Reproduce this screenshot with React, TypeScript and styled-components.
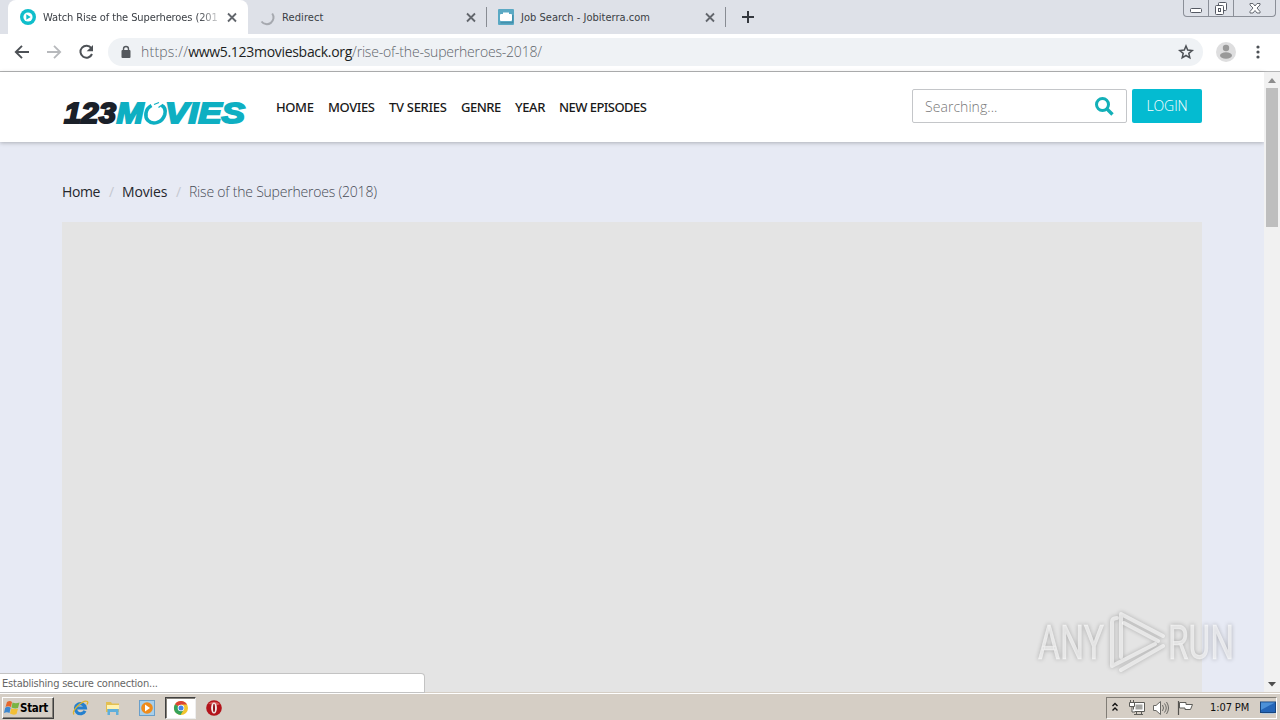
import React from "react";
import styled, { createGlobalStyle } from "styled-components";

const Global = createGlobalStyle`
  * { box-sizing: border-box; }
  body { margin: 0; overflow: hidden; background: #e7eaf4; }
  svg { display: block; flex: none; overflow: visible; }
`;

const ui = `"DejaVu Sans Condensed", "DejaVu Sans", sans-serif`;

const Screen = styled.div`
  width: 1280px;
  height: 720px;
  display: flex;
  flex-direction: column;
  position: relative;
  overflow: hidden;
`;

/* Tab strip */
const TabStrip = styled.div`
  height: 34px;
  flex: none;
  display: flex;
  align-items: flex-start;
  background: #dee1e8;
  padding-left: 8px;
`;
const Tab = styled.div<{ $active?: boolean; $w: number; $pad?: number }>`
  width: ${(p) => p.$w}px;
  height: 34px;
  display: flex;
  align-items: center;
  padding-left: ${(p) => p.$pad ?? 12}px;
  padding-right: ${(p) => (p.$active ? 8 : 7)}px;
  background: ${(p) => (p.$active ? "#fff" : "transparent")};
  border-radius: 8px 8px 0 0;
`;
const TabTitle = styled.span<{ $ls: number; $fade?: boolean }>`
  flex: 1;
  margin-left: 7px;
  padding-top: 1px;
  white-space: nowrap;
  font: 11px/16px ${ui};
  font-stretch: condensed;
  letter-spacing: ${(p) => p.$ls}px;
  color: #3a3e44;
  ${(p) => p.$fade && "mask-image: linear-gradient(90deg, #000 156px, rgba(0,0,0,.2) 175px);"}
`;
const TabClose = styled.span`
  width: 16px;
  margin-left: 6px;
`;
const Separator = styled.span`
  width: 1px;
  height: 20px;
  margin-top: 7px;
  background: #888c93;
`;
const NewTab = styled.span`
  margin: 10px 0 0 15px;
`;
const WindowButtons = styled.div`
  display: flex;
  margin: 0 4px 0 auto;
  width: 93px;
  height: 17px;
  border: 1px solid #8b8f98;
  border-top: 0;
  border-radius: 0 0 4px 4px;
`;
const WindowButton = styled.span<{ $w: number }>`
  width: ${(p) => p.$w}px;
  display: flex;
  justify-content: center;
  & + & { border-left: 1px solid #8b8f98; }
`;

/* Address bar */
const Toolbar = styled.div`
  height: 38px;
  flex: none;
  display: flex;
  align-items: center;
  background: #fff;
  border-bottom: 1px solid #b4b5b6;
  padding: 0 14px 1px;
`;
const ToolIcon = styled.span<{ $gap: number }>`
  margin-right: ${(p) => p.$gap}px;
`;
const Omnibox = styled.div`
  width: 1095px;
  flex: none;
  margin-right: 13px;
  height: 28px;
  border-radius: 14px;
  background: #eff2f5;
  display: flex;
  align-items: center;
  padding: 0 9px 0 11px;
`;
const Url = styled.span`
  flex: 1;
  margin-left: 8px;
  font: 300 14px/20px "Open Sans", sans-serif;
  letter-spacing: -0.19px;
  color: #5f656b;
`;
const Scheme = styled.span`
  letter-spacing: 0.22px;
`;
const Domain = styled.span`
  font-weight: 400;
  letter-spacing: -0.3px;
  color: #1c1f23;
`;

/* Page */
const Viewport = styled.div`
  flex: 1;
  min-height: 0;
  display: flex;
`;
const Page = styled.main`
  width: 1264px;
  background: #e7eaf4;
  display: flex;
  flex-direction: column;
`;
const Header = styled.header`
  height: 70px;
  flex: none;
  display: flex;
  align-items: flex-start;
  background: #fff;
  box-shadow: 0 1px 4px rgba(0, 0, 0, 0.25);
  padding: 17px 62px 0 62px;
`;
const LogoBox = styled.div`
  width: 214px;
  padding-top: 8px;
`;
const Nav = styled.nav`
  display: flex;
  padding-top: 8px;
`;
const NavLink = styled.span<{ $w: number; $ls?: number }>`
  width: ${(p) => p.$w}px;
  font: 500 13px/20px "Noto Sans", sans-serif;
  letter-spacing: ${(p) => p.$ls ?? -0.4}px;
  white-space: nowrap;
  color: #191919;
`;
const Search = styled.div`
  width: 215px;
  height: 34px;
  margin-left: auto;
  border: 1px solid #c4c6c9;
  border-radius: 2px;
  display: flex;
  align-items: center;
  justify-content: space-between;
  padding: 0 12px 0 12px;
  font: 300 14px/20px "Open Sans", sans-serif;
  letter-spacing: 0.05px;
  color: #777;
`;
const Placeholder = styled.span`
  padding-top: 2px;
`;
const Login = styled.div`
  width: 70px;
  height: 34px;
  margin-left: 5px;
  border-radius: 2px;
  background: #04bbd1;
  color: #fff;
  font: 300 14px/33px "Open Sans", sans-serif;
  letter-spacing: -0.1px;
  text-align: center;
`;
const Crumbs = styled.div`
  display: flex;
  margin: 40px 0 20px 62px;
  font: 400 14px/20px "Open Sans", sans-serif;
  color: #25272d;
`;
const Crumb = styled.span<{ $w?: number; $muted?: boolean; $ls: number }>`
  width: ${(p) => (p.$w ? p.$w + "px" : "auto")};
  letter-spacing: ${(p) => p.$ls}px;
  white-space: nowrap;
  font-weight: ${(p) => (p.$muted ? 300 : 400)};
  color: ${(p) => (p.$muted ? "#484c56" : "#25272d")};
`;
const Slash = styled.span<{ $w: number }>`
  width: ${(p) => p.$w}px;
  color: #c5c8d0;
`;
const Player = styled.div`
  flex: 1;
  width: 1140px;
  margin-left: 62px;
  background: #e4e4e4;
`;
const Scrollbar = styled.div`
  width: 16px;
  background: #f1f1f1;
  display: flex;
  flex-direction: column;
  align-items: center;
`;
const Arrow = styled.span`
  height: 16px;
  padding-top: 6px;
`;
const Thumb = styled.span`
  width: 12px;
  height: 139px;
  background: #bebebe;
  margin-bottom: auto;
`;

/* Overlays */
const Status = styled.div`
  position: absolute;
  left: 0;
  top: 673px;
  width: 425px;
  height: 20px;
  background: #fff;
  border: 1px solid #c3c3c3;
  border-left: 0;
  border-radius: 0 4px 0 0;
  padding: 1px 0 0 2px;
  font: 11px/18px ${ui};
  font-stretch: condensed;
  letter-spacing: -0.22px;
  color: #666;
`;
const Watermark = styled.div`
  position: absolute;
  left: 1036px;
  top: 608px;
  width: 200px;
  height: 66px;
  filter: drop-shadow(0 0 2px rgba(0, 0, 0, 0.4));
`;

/* Taskbar */
const Taskbar = styled.footer`
  height: 28px;
  flex: none;
  background: #d5cec5;
  border-top: 1px solid #d5cec5;
  box-shadow: inset 0 1px #fff;
  display: flex;
  align-items: center;
  padding: 2px 3px 0 2px;
`;
const Start = styled.div`
  width: 52px;
  height: 22px;
  display: flex;
  align-items: center;
  padding-left: 1px;
  border: 1px solid;
  border-color: #fff #404040 #404040 #fff;
  box-shadow: inset -1px -1px #85817a;
  font: bold 11.5px/16px ${ui};
  font-stretch: condensed;
  letter-spacing: -0.3px;
  color: #000;
`;
const TaskIcon = styled.span<{ $w: number; $shift?: number; $pressed?: boolean }>`
  width: ${(p) => p.$w}px;
  height: 22px;
  margin-left: ${(p) => p.$shift ?? 0}px;
  display: flex;
  align-items: center;
  justify-content: center;
  ${(p) =>
    p.$pressed &&
    "background: #fff; border: 1px solid; border-color: #404040 #eee #eee #404040; box-shadow: inset 1px 1px #85817a;"}
`;
const Tray = styled.div`
  width: 171px;
  height: 22px;
  margin-left: auto;
  display: flex;
  align-items: center;
  border: 1px solid;
  border-color: #817d76 #fff #fff #817d76;
  padding-left: 4px;
  font: 11px/16px ${ui};
  font-stretch: condensed;
  color: #111;
`;
const Clock = styled.span`
  width: 51px;
  margin-left: 16px;
  letter-spacing: -0.1px;
  white-space: nowrap;
`;
const TrayIcon = styled.span<{ $l?: number }>`
  margin-left: ${(p) => p.$l ?? 0}px;
`;

const Cross = () => (
  <svg width="16" height="16" viewBox="0 0 16 16" stroke="#62666c" strokeWidth="1.8">
    <path d="M4 4.500l8 8M12 4.500l-8 8" />
  </svg>
);

const Logo = () => (
  <svg width="188" height="32" viewBox="0 0 188 32" fontFamily='"Liberation Sans", Arial, sans-serif' fontWeight="bold" fontStyle="italic" fontSize="29" strokeWidth="1.9">
    <text x="2" y="26.200" textLength="52" lengthAdjust="spacingAndGlyphs" fill="#1a2029" stroke="#1a2029">123</text>
    <g fill="#0eafc2" stroke="#0eafc2">
      <text x="54.500" y="26.200" textLength="27" lengthAdjust="spacingAndGlyphs">M</text>
      <text x="103" y="26.200" textLength="80" lengthAdjust="spacingAndGlyphs">VIES</text>
    </g>
    <path d="M89.500 8.500C83 12 82.500 20 86 23.500C91 28.500 100.500 25.500 102.800 17.500C104 12.500 102 9.500 99.500 8.300" fill="none" stroke="#0eafc2" strokeWidth="3.600" />
    <path d="M92 7.500l5-2M96.500 10.500l3.500-2.500" stroke="#0eafc2" strokeWidth="1.300" fill="none" />
  </svg>
);

export default function App() {
  return (
    <Screen>
      <Global />
      <TabStrip>
        <Tab $active $w={240}>
          <svg width="16" height="16" viewBox="0 0 16 16">
            <circle cx="8" cy="8" r="8" fill="#0fbecb" />
            <circle cx="8" cy="8" r="4.600" fill="#fff" />
            <path d="M6.300 5.200l4.400 2.800-4.400 2.800z" fill="#0fbecb" />
          </svg>
          <TabTitle $ls={-0.1} $fade>Watch Rise of the Superheroes (201</TabTitle>
          <TabClose><Cross /></TabClose>
        </Tab>
        <Tab $w={238} $pad={11}>
          <svg width="16" height="16" viewBox="0 0 16 16" fill="none" stroke="#a6a9af" strokeWidth="2">
            <path d="M13.200 4.500A6 6 0 0 1 2.500 12.500" />
          </svg>
          <TabTitle $ls={0.1}>Redirect</TabTitle>
          <TabClose><Cross /></TabClose>
        </Tab>
        <Separator />
        <Tab $w={238} $pad={11}>
          <svg width="16" height="16" viewBox="0 0 16 16">
            <rect width="16" height="16" rx="1" fill="#5ba9c4" />
            <path d="M5 3.500h6V5h2a1 1 0 0 1 1 1v5a1 1 0 0 1-1 1H3a1 1 0 0 1-1-1V6a1 1 0 0 1 1-1h2z" fill="#fff" />
            <path d="M2.500 13.800h12.300V6" fill="none" stroke="#3986a3" />
          </svg>
          <TabTitle $ls={0.02}>Job Search - Jobiterra.com</TabTitle>
          <TabClose><Cross /></TabClose>
        </Tab>
        <Separator />
        <NewTab>
          <svg width="14" height="14" viewBox="0 0 14 14" stroke="#34383e" strokeWidth="2"><path d="M7 1v12M1 7h12" /></svg>
        </NewTab>
        <WindowButtons>
          <WindowButton $w={24}>
            <svg width="24" height="16" viewBox="0 0 24 16"><rect x="6.500" y="8.500" width="11" height="4" rx="1" fill="#fff" stroke="#555963" /></svg>
          </WindowButton>
          <WindowButton $w={25}>
            <svg width="24" height="16" viewBox="0 0 24 16" fill="#fff" stroke="#555963"><rect x="9.500" y="2.500" width="8" height="8" rx="1" /><rect x="6.500" y="5.500" width="8" height="9" rx="1" /><rect x="9.500" y="8.500" width="2" height="3" /></svg>
          </WindowButton>
          <WindowButton $w={42}>
            <svg width="24" height="16" viewBox="0 0 24 16"><path d="M7 3.500h3l2 2.500 2-2.500h3v1.500L14 8l3 3.500V13h-3l-2-2.500-2 2.500H7v-1.500L10 8 7 5z" fill="#fff" stroke="#666a72" /></svg>
          </WindowButton>
        </WindowButtons>
      </TabStrip>

      <Toolbar>
        <ToolIcon $gap={16}>
          <svg width="16" height="16" viewBox="0 0 16 16" fill="none" stroke="#4d5156" strokeWidth="1.900"><path d="M15 8H2.500M8 1.800L1.800 8 8 14.200" /></svg>
        </ToolIcon>
        <ToolIcon $gap={16}>
          <svg width="16" height="16" viewBox="0 0 16 16" fill="none" stroke="#b7b9bc" strokeWidth="1.800"><path d="M1 8h12.500M8 1.800L14.200 8 8 14.200" /></svg>
        </ToolIcon>
        <ToolIcon $gap={14}>
          <svg width="16" height="16" viewBox="0 0 16 16"><path d="M13.300 4.200A6 6 0 1 0 14 10" fill="none" stroke="#4d5156" strokeWidth="2" /><path d="M15 1v6.300H8.700z" fill="#4d5156" /></svg>
        </ToolIcon>
        <Omnibox>
          <svg width="14" height="14" viewBox="0 0 14 14"><rect x="2.500" y="5" width="9" height="8" rx="1" fill="#54585d" /><path d="M4.500 5.500V4a2.500 2.500 0 0 1 5 0v1.500" fill="none" stroke="#54585d" strokeWidth="1.400" /></svg>
          <Url><Scheme>https://</Scheme><Domain>www5.123moviesback.org</Domain>/rise-of-the-superheroes-2018/</Url>
          <svg width="16" height="16" viewBox="0 0 16 16"><path d="M8 2l1.700 4.100 4.500.4-3.400 2.900 1 4.400L8 11.500l-3.800 2.300 1-4.400L1.800 6.500l4.500-.4z" fill="none" stroke="#4d5156" strokeWidth="1.500" /></svg>
        </Omnibox>
        <ToolIcon $gap={20}>
          <svg width="20" height="20" viewBox="0 0 20 20"><circle cx="10" cy="10" r="10" fill="#dededf" /><circle cx="10" cy="6" r="3.200" fill="#999" /><ellipse cx="10" cy="13.500" rx="6" ry="3.200" fill="#999" /></svg>
        </ToolIcon>
        <svg width="4" height="16" viewBox="0 0 4 16" fill="#4d5156"><circle cx="2" cy="3" r="1.600" /><circle cx="2" cy="8" r="1.600" /><circle cx="2" cy="13" r="1.600" /></svg>
      </Toolbar>

      <Viewport>
        <Page>
          <Header>
            <LogoBox><Logo /></LogoBox>
            <Nav>
              <NavLink $w={52}>HOME</NavLink>
              <NavLink $w={61}>MOVIES</NavLink>
              <NavLink $w={72} $ls={-0.3}>TV SERIES</NavLink>
              <NavLink $w={54} $ls={-0.5}>GENRE</NavLink>
              <NavLink $w={44}>YEAR</NavLink>
              <NavLink $w={90} $ls={-0.55}>NEW EPISODES</NavLink>
            </Nav>
            <Search>
              <Placeholder>Searching...</Placeholder>
              <svg width="19" height="19" viewBox="0 0 19 19" fill="none" stroke="#13b0b8"><circle cx="7.500" cy="7.500" r="6" strokeWidth="3" /><path d="M12 12l5.500 5.500" strokeWidth="3.300" /></svg>
            </Search>
            <Login>LOGIN</Login>
          </Header>
          <Crumbs>
            <Crumb $w={47} $ls={-0.4}>Home</Crumb>
            <Slash $w={13}>/</Slash>
            <Crumb $w={54} $ls={-0.15}>Movies</Crumb>
            <Slash $w={13}>/</Slash>
            <Crumb $muted $ls={-0.21}>Rise of the Superheroes (2018)</Crumb>
          </Crumbs>
          <Player />
        </Page>
        <Scrollbar>
          <Arrow><svg width="8" height="5" viewBox="0 0 8 5"><path d="M0 5l4-5 4 5z" fill="#8c8c8c" /></svg></Arrow>
          <Thumb />
          <Arrow><svg width="8" height="5" viewBox="0 0 8 5"><path d="M0 0h8L4 4.500z" fill="#4d4d4d" /></svg></Arrow>
        </Scrollbar>
      </Viewport>

      <Taskbar>
        <Start>
          <svg width="16" height="16" viewBox="0 0 16 16"><path d="M3 2q3-2 5 0L7 7Q4 5.500 1.500 7z" fill="#e5672c" /><path d="M8.500 2.500q3 1.500 7 0L14 8q-3 1-6.500-.5z" fill="#79b443" /><path d="M1.200 7.700Q4 6 6.700 7.700l-1.200 5.300Q3 11.500 0 13z" fill="#3d87cf" /><path d="M7.300 8.200q3 1.500 6.700.5l-1.500 5.300q-3 1.500-6.500-.5z" fill="#f3bf35" /></svg>
          Start
        </Start>
        <TaskIcon $w={52}>
          <svg width="17" height="16" viewBox="0 0 17 16" fill="none"><path d="M13 10.800A5 5 0 1 1 13.400 8H4.500" stroke="#2580ce" strokeWidth="3.200" /><path d="M2 14.500C-1 11 11-1 15.500 1.500c1 1 0 2-.5 3" stroke="#dfb52c" strokeWidth="1.300" /></svg>
        </TaskIcon>
        <TaskIcon $w={15} $shift={-1}>
          <svg width="16" height="16" viewBox="0 0 16 16"><path d="M1 2h5l1 1.500h7V12H1z" fill="#e3bf52" /><path d="M2 5h12v4H2z" fill="#fff2b0" /><path d="M2.500 15V9h11v6H11v-3H5v3z" fill="#5fafdc" /></svg>
        </TaskIcon>
        <TaskIcon $w={52} $shift={1}>
          <svg width="16" height="16" viewBox="0 0 16 16"><rect x=".5" y=".5" width="15" height="15" fill="#a8cfea" stroke="#6a9fca" /><circle cx="8" cy="8" r="5.800" fill="#ef8b1b" /><path d="M6 4.500l5 3.500-5 3.500z" fill="#fff" /></svg>
        </TaskIcon>
        <TaskIcon $w={31} $shift={-8} $pressed>
          <svg width="14" height="14" viewBox="0 0 14 14"><circle cx="7" cy="7" r="7" fill="#f2c52e" /><path d="M7 7L1 3.300A7 7 0 0 1 13 3.500H7z" fill="#dc4335" /><path d="M1 3.300A7 7 0 0 0 6.500 14L9.500 9z" fill="#35a25a" /><circle cx="7" cy="7" r="3.300" fill="#fff" /><circle cx="7" cy="7" r="2.500" fill="#4684e8" /></svg>
        </TaskIcon>
        <TaskIcon $w={36}>
          <svg width="16" height="16" viewBox="0 0 16 16"><circle cx="8" cy="8" r="7.800" fill="#b3141b" /><path d="M2 4Q8-.5 14 4Q11 6 8 5T2 4z" fill="#d85a58" /><ellipse cx="8" cy="8" rx="2.900" ry="5.600" fill="#f3eeec" /><ellipse cx="8" cy="8" rx="1" ry="4.300" fill="#8f1116" /></svg>
        </TaskIcon>
        <Tray>
          <svg width="8" height="11" viewBox="0 0 8 11" fill="none" stroke="#111" strokeWidth="1.400"><path d="M1.500 4L4 1.500 6.500 4M1.500 8.500L4 6l2.500 2.500" /></svg>
          <TrayIcon $l={10}>
            <svg width="16" height="16" viewBox="0 0 16 16" fill="#fff" stroke="#5d5c58"><path d="M4.500 2.500h11v9h-11zM7.500 11.500v3M5 14.500h9M12.500 11.500v3" /><path d="M6.500 4.500h7v5h-7z" fill="#a5a5a2" stroke="none" /><path d="M.5 2.500h5v4h-5zM1.500 0v2M4.500 0v2M3 7v5h3" /></svg>
          </TrayIcon>
          <TrayIcon $l={8}>
            <svg width="16" height="16" viewBox="0 0 16 16" fill="none" stroke="#696864"><path d="M.5 5.500H3l4.500-4v13L3 10.500H.5z" fill="#fff" /><path d="M9.500 5q2 3 0 6M11.500 3.500q3.500 4.500 0 9M13.500 2q4 6 0 12" /></svg>
          </TrayIcon>
          <TrayIcon $l={8}>
            <svg width="17" height="16" viewBox="0 0 17 16"><path d="M1.500 1v14" stroke="#55534f" strokeWidth="1.200" /><path d="M2.500 2.500H9v2h6.500l-2 5H8v-1.500H2.500z" fill="#fff" stroke="#5d5c58" /></svg>
          </TrayIcon>
          <Clock>1:07 PM</Clock>
          <svg width="16" height="14" viewBox="0 0 16 14"><rect x=".5" y="1" width="15" height="10.500" fill="#2465b7" stroke="#174680" /><path d="M1 1.500h14L1 9z" fill="#4c91d8" /><path d="M2 12.500h12" stroke="#b2c9df" /></svg>
        </Tray>
      </Taskbar>

      <Watermark>
        <svg width="200" height="66" viewBox="0 0 200 66" fontFamily="Roboto, sans-serif" fontWeight="400" fontSize="49" fill="#fff" fillOpacity=".6" stroke="#fff" strokeOpacity=".4" strokeWidth=".8">
          <text x="2" y="50.500" textLength="66" lengthAdjust="spacingAndGlyphs">ANY</text>
          <g fill="none" strokeOpacity=".6" strokeWidth="4" strokeLinejoin="round" strokeLinecap="round">
            <path d="M81 10q-5 0-5 4v44l43-22" />
            <path d="M85 49V6l42 22" />
            <path d="M85 62l42-24M88 15l34 18" />
          </g>
          <text x="132" y="50.500" textLength="66" lengthAdjust="spacingAndGlyphs">RUN</text>
        </svg>
      </Watermark>
      <Status>Establishing secure connection...</Status>
    </Screen>
  );
}
